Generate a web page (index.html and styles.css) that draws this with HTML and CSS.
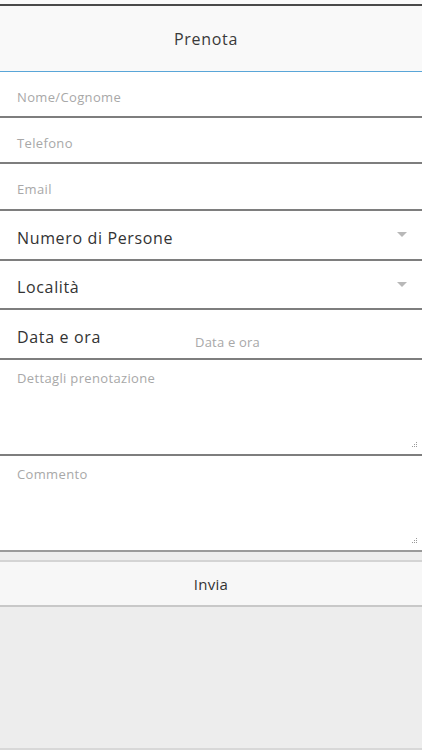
FILE: index.html
```html
<!DOCTYPE html>
<html lang="it">
<head>
<meta charset="utf-8">
<title>Prenota</title>
<link rel="stylesheet" href="styles.css">
</head>
<body>
<div class="page">
  <div class="topgap"></div>
  <header class="header"><h1 class="title">Prenota</h1></header>
  <form class="form">
    <div class="field input"><span class="ph">Nome/Cognome</span></div>
    <div class="field input"><span class="ph">Telefono</span></div>
    <div class="field input email"><span class="ph">Email</span></div>
    <div class="field select"><span class="label">Numero di Persone</span><span class="caret"></span></div>
    <div class="field select loc"><span class="label">Località</span><span class="caret"></span></div>
    <div class="field select date"><span class="label">Data e ora</span><span class="ph date-ph">Data e ora</span></div>
    <div class="field area"><span class="ph">Dettagli prenotazione</span>
      <svg class="grip" width="6" height="6" viewBox="0 0 6 6"><g fill="#999"><rect x="4" y="0" width="1" height="1"/><rect x="4" y="2" width="1" height="1"/><rect x="2" y="2" width="1" height="1"/><rect x="4" y="4" width="1" height="1"/><rect x="2" y="4" width="1" height="1"/><rect x="0" y="4" width="1" height="1"/></g></svg>
    </div>
    <div class="field area last"><span class="ph">Commento</span>
      <svg class="grip" width="6" height="6" viewBox="0 0 6 6"><g fill="#999"><rect x="4" y="0" width="1" height="1"/><rect x="4" y="2" width="1" height="1"/><rect x="2" y="2" width="1" height="1"/><rect x="4" y="4" width="1" height="1"/><rect x="2" y="4" width="1" height="1"/><rect x="0" y="4" width="1" height="1"/></g></svg>
    </div>
  </form>
  <div class="footer">
    <div class="btn">Invia</div>
  </div>
</div>
</body>
</html>
```

FILE: styles.css
```css
* { box-sizing: border-box; }
html, body { margin: 0; padding: 0; }
body {
  width: 422px;
  height: 750px;
  background: #ededed;
  font-family: "Open Sans", "Noto Sans", sans-serif;
  overflow: hidden;
}
.page { display: flex; flex-direction: column; height: 750px; }
.topgap { height: 4px; background: #fbfbfb; }
.header {
  height: 68px;
  background: #f9f9f9;
  border-top: 2px solid #4a4a4a;
  border-bottom: 1px solid #5aa6d8;
  display: flex;
  align-items: center;
  justify-content: center;
  padding-right: 10px;
}
.title {
  margin: 0;
  font-size: 16px;
  font-weight: 400;
  color: #3a3a3a;
  letter-spacing: 0.7px;
}
.form { background: #fff; display: flex; flex-direction: column; }
.field {
  position: relative;
  display: flex;
  align-items: center;
  padding: 5px 17px 0 17px;
  border-bottom: 2px solid #7e7e7e;
}
.input { height: 46px; }
.input.email { height: 47px; }
.select { height: 50px; justify-content: space-between; padding-top: 5px; }
.select.loc { height: 49px; }
.select.date { height: 50px; }
.ph { font-size: 13px; color: #a8a8a8; letter-spacing: 0.35px; }
.label { font-size: 16px; color: #333; letter-spacing: 0.65px; }
.caret {
  width: 0; height: 0;
  border-left: 5px solid transparent;
  border-right: 5px solid transparent;
  border-top: 5px solid #b8b8b8;
  margin-right: -2px;
  margin-top: -6px;
}
.date { justify-content: flex-start; }
.date .label { width: 178px; flex: none; }
.date-ph { margin-top: 10px; letter-spacing: 0.2px; }
.area {
  height: 96px;
  align-items: flex-start;
  padding-top: 9px;
}
.area.last { border-bottom: 2px solid #9a9a9a; }
.grip { position: absolute; right: 4px; bottom: 6px; }
.footer {
  flex: 1;
  padding-top: 8px;
  border-bottom: 2px solid #d8d8d8;
}
.btn {
  height: 47px;
  background: #f7f7f7;
  border-top: 2px solid #d4d4d4;
  border-bottom: 2px solid #c8c8c8;
  display: flex;
  align-items: center;
  justify-content: center;
  font-size: 15px;
  color: #333;
  letter-spacing: 0.3px;
}
```
